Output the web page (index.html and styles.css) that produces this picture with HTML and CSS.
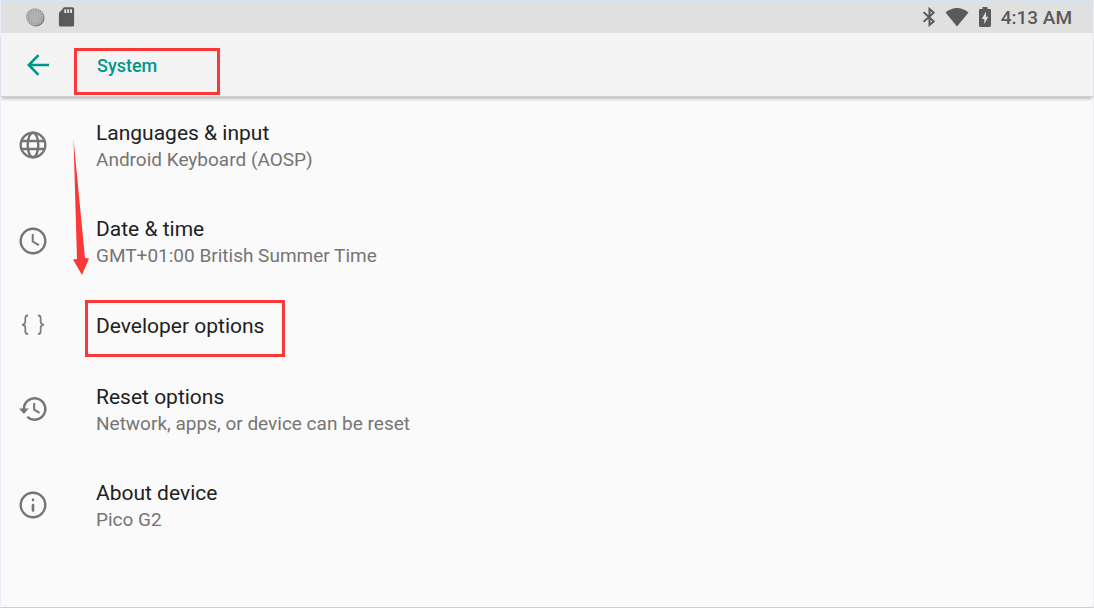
FILE: index.html
```
<!DOCTYPE html>
<html lang="en">
<head>
<meta charset="utf-8">
<meta name="viewport" content="width=device-width, initial-scale=1">
<title>System</title>
<link rel="stylesheet" href="styles.css">
</head>
<body>
<div class="screen">
  <div class="status-bar">
    <div class="status-group status-left">
      <svg class="status-icon" viewBox="0 0 20 20" aria-hidden="true">
        <circle cx="11" cy="11" r="8.5" fill="#707070"/>
        <circle cx="10" cy="10" r="8.8" fill="#9a9a9a"/>
        <circle cx="10" cy="10" r="7.4" fill="none" stroke="#c4c4c4" stroke-width="1.4" stroke-dasharray="1.2 1.4"/>
        <circle cx="10" cy="10" r="6.4" fill="#b0b0b0"/>
      </svg>
      <svg class="status-icon" viewBox="0 0 20 20" aria-hidden="true">
        <path fill="#5a5a5a" d="M8 0.300H16.500a1.600 1.600 0 0 1 1.600 1.600V17.900a1.600 1.600 0 0 1-1.600 1.600H4.500a1.600 1.600 0 0 1-1.600-1.600V6z"/>
        <path fill="#e0e0e0" d="M8.300 2.200h1.900v3.800H8.300zM11.200 2.200h1.900v3.800H11.200zM14.100 2.200h1.900v3.800H14.100z"/>
      </svg>
    </div>
    <div class="status-group status-right">
      <svg class="bluetooth" viewBox="0 0 12 20" aria-hidden="true">
        <path fill="none" stroke="#5a5a5a" stroke-width="2" d="M.6 5.200 10.700 14.300 6.500 18V2l4.200 3.700L.6 14.800"/>
      </svg>
      <svg class="wifi" viewBox="0 0 24 20" aria-hidden="true">
        <path fill="#5a5a5a" d="M.5 5.500C4 2.500 8 1 12 1s8 1.500 11.500 4.500L12 19.500z"/>
      </svg>
      <svg class="battery" viewBox="0 0 12 20" aria-hidden="true">
        <path fill="#5a5a5a" d="M3.500 0h5v2H10.500A1.300 1.300 0 0 1 12 3.300V18.500A1.500 1.500 0 0 1 10.500 20h-9A1.500 1.500 0 0 1 0 18.500V3.300A1.300 1.300 0 0 1 1.500 2h2z"/>
        <path fill="#e0e0e0" d="M7 4.500 2.800 12h2.500v5L9.300 9.800H7z"/>
      </svg>
      <time class="clock">4:13 AM</time>
    </div>
  </div>
  <header class="toolbar">
    <button class="back" type="button" aria-label="Back">
      <svg viewBox="0 0 24 24" aria-hidden="true"><path fill="none" stroke="#009688" stroke-width="2.600" d="M23 12H3M12.500 2.200 2.800 12l9.700 9.800"/></svg>
    </button>
    <h1 class="title">System</h1>
    <span class="mark mark-title"></span>
  </header>
  <main>
    <ul class="list">
      <li><a class="item" href="#languages">
        <svg class="item-icon" viewBox="0 0 32 32" aria-hidden="true"><g fill="none" stroke="#757575" stroke-width="2.400"><circle cx="16" cy="16" r="12.300"/><ellipse cx="16" cy="16" rx="5.300" ry="12.300"/><path d="M4.800 12h22.400M4.800 20h22.400"/></g></svg>
        <span class="text"><span class="name">Languages &amp; input</span><span class="summary">Android Keyboard (AOSP)</span></span>
      </a>
        <svg class="arrow" viewBox="0 0 16 136" aria-hidden="true"><path fill="#fb3838" d="M.5 0 12 119l4 0.500L9 136 0 120.500l4-.5z"/></svg>
      </li>
      <li><a class="item" href="#date">
        <svg class="item-icon" viewBox="0 0 32 32" aria-hidden="true"><g fill="none" stroke="#757575" stroke-width="2.400"><circle cx="16" cy="16" r="12.300"/><path stroke-width="2" d="M15.700 9v7.500l6.200 3.700"/></g></svg>
        <span class="text"><span class="name">Date &amp; time</span><span class="summary">GMT+01:00 British Summer Time</span></span>
      </a></li>
      <li><a class="item item-single" href="#developer">
        <svg class="item-icon" viewBox="0 0 32 32" aria-hidden="true"><path fill="none" stroke="#808080" stroke-width="1.800" d="M11.100 6.500h-.5q-2.300 0-2.300 3v3q0 2.800-2.300 2.800v.8q2.300 0 2.300 2.800v3q0 3 2.300 3h.5M20.900 6.500h.5q2.300 0 2.300 3v3q0 2.800 2.300 2.800v.8q-2.300 0-2.300 2.800v3q0 3-2.300 3h-.5"/></svg>
        <span class="text"><span class="name">Developer options</span></span>
      </a>
        <span class="mark mark-developer"></span>
      </li>
      <li><a class="item" href="#reset">
        <svg class="item-icon" viewBox="0 0 32 32" aria-hidden="true"><path fill="none" stroke="#757575" stroke-width="2.400" d="M6.900 17V16A10.700 10.700 0 1 1 10.300 23.800"/><path fill="#757575" d="M2 15.500h9.800L6.900 21z"/><path fill="none" stroke="#757575" stroke-width="2" d="M17.200 10v6.600l5.300 3.300"/></svg>
        <span class="text"><span class="name">Reset options</span><span class="summary">Network, apps, or device can be reset</span></span>
      </a></li>
      <li><a class="item" href="#about">
        <svg class="item-icon" viewBox="0 0 32 32" aria-hidden="true"><circle cx="16" cy="16" r="12.300" fill="none" stroke="#757575" stroke-width="2.400"/><path stroke="#757575" stroke-width="2.600" stroke-linecap="round" d="M16 16v5.500M16 10.900v.1"/></svg>
        <span class="text"><span class="name">About device</span><span class="summary">Pico G2</span></span>
      </a></li>
    </ul>
  </main>
</div>
</body>
</html>
```
FILE: styles.css
```
* { box-sizing: border-box; }

body {
  margin: 0;
  font-family: Roboto, "Liberation Sans", sans-serif;
  color: #212121;
}

.screen {
  min-height: 100vh;
  background: #fafafa;
  border: 1px solid #e8effa;
  border-top-color: #d6e3f1;
  border-bottom-color: #bdd0e4;
}

.status-bar {
  display: flex;
  align-items: center;
  justify-content: space-between;
  height: 32px;
  padding: 0 21px 0 24px;
  background: #e0e0e0;
  color: #5a5a5a;
}

.status-group { display: flex; align-items: center; }
.status-left { gap: 11px; }
.status-right { gap: 10px; }
.status-icon { width: 20px; height: 20px; }
.bluetooth { width: 12px; height: 20px; }
.wifi { width: 24px; height: 20px; }
.battery { width: 12px; height: 20px; }
.clock { font-size: 19px; line-height: 32px; padding-top: 1px; font-weight: 500; }

.toolbar {
  position: relative;
  display: flex;
  align-items: center;
  height: 64px;
  background: #f4f4f4;
  border-bottom: 1px solid #d0d0d0;
  box-shadow: 0 3px 3px -1px rgba(0, 0, 0, .25);
}

.back {
  width: 96px;
  height: 64px;
  padding: 0 0 0 25px;
  border: 0;
  background: none;
  text-align: left;
  cursor: pointer;
}
.back svg { display: block; width: 24px; height: 24px; }

.title {
  margin: 0;
  padding-top: 2px;
  font-size: 18px;
  line-height: 24px;
  font-weight: 500;
  color: #009688;
}

.list { margin: 0; padding: 0; list-style: none; }
.list li { position: relative; }

.item {
  display: flex;
  align-items: center;
  min-height: 96px;
  padding-left: 16px;
  color: inherit;
  text-decoration: none;
}
.item-single { min-height: 72px; }
.item-icon { flex: none; width: 32px; height: 32px; margin-right: 47px; }
.text { display: flex; flex-direction: column; padding-top: 2px; }
.name { font-size: 21px; line-height: 28px; }
.summary { font-size: 19px; line-height: 26px; color: #757575; }

.mark { position: absolute; border: 3px solid #fb3838; pointer-events: none; }
.mark-title { left: 73px; top: 15px; width: 146px; height: 47px; }
.mark-developer { left: 84px; top: 11px; width: 200px; height: 57px; }
.arrow { position: absolute; left: 72px; top: 42px; width: 16px; height: 136px; z-index: 1; pointer-events: none; }
```
